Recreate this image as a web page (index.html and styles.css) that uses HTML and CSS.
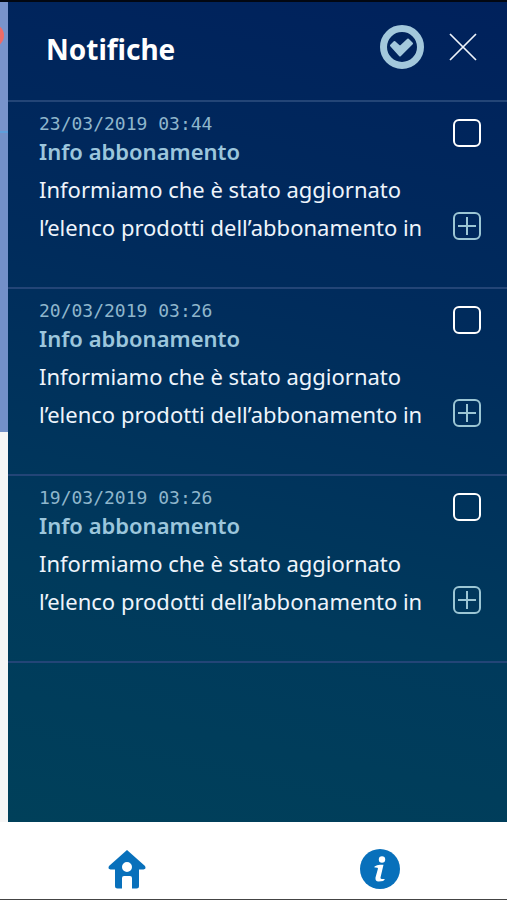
FILE: index.html
```html
<!DOCTYPE html>
<html lang="it">
<head>
<meta charset="utf-8">
<meta name="viewport" content="width=device-width, initial-scale=1">
<title>Notifiche</title>
<link rel="stylesheet" href="styles.css">
</head>
<body>
<div class="app">
  <div class="stage">
    <div class="page-edge">
      <div class="page-edge-top"></div>
      <div class="page-edge-main"></div>
      <span class="page-edge-badge"></span>
    </div>
    <main class="panel">
      <header class="panel-header">
        <h1>Notifiche</h1>
        <button class="icon-button" type="button" aria-label="Seleziona tutte">
          <svg width="44" height="44" viewBox="0 0 44 44"><circle cx="22" cy="22" r="18.5" fill="none" stroke="#a3c8dc" stroke-width="7"/><path fill="#a3c8dc" stroke="#a3c8dc" stroke-width="2" stroke-linejoin="round" d="M11 20.500L14.500 17L20 22L28 14.500L32 18.500L20 30.500Z"/></svg>
        </button>
        <button class="icon-button" type="button" aria-label="Chiudi">
          <svg width="28" height="28" viewBox="0 0 28 28"><path d="M1 1l26 26M27 1L1 27" fill="none" stroke="#eef4fb" stroke-width="1.700"/></svg>
        </button>
      </header>
      <ul class="list">
        <li class="item">
          <div class="item-body">
            <time datetime="2019-03-23T03:44">23/03/2019 03:44</time>
            <h2>Info abbonamento</h2>
            <p>Informiamo che è stato aggiornato l’elenco prodotti dell’abbonamento in</p>
          </div>
          <div class="item-actions">
            <input type="checkbox" aria-label="Seleziona notifica del 23/03/2019">
            <button class="icon-button" type="button" aria-label="Espandi">
              <svg width="28" height="28" viewBox="0 0 28 28"><rect x="1" y="1" width="26" height="26" rx="5" fill="none" stroke="#9cc6d4" stroke-width="2"/><path d="M14 5v18M5 14h18" fill="none" stroke="#9cc6d4" stroke-width="2"/></svg>
            </button>
          </div>
        </li>
        <li class="item">
          <div class="item-body">
            <time datetime="2019-03-20T03:26">20/03/2019 03:26</time>
            <h2>Info abbonamento</h2>
            <p>Informiamo che è stato aggiornato l’elenco prodotti dell’abbonamento in</p>
          </div>
          <div class="item-actions">
            <input type="checkbox" aria-label="Seleziona notifica del 20/03/2019">
            <button class="icon-button" type="button" aria-label="Espandi">
              <svg width="28" height="28" viewBox="0 0 28 28"><rect x="1" y="1" width="26" height="26" rx="5" fill="none" stroke="#9cc6d4" stroke-width="2"/><path d="M14 5v18M5 14h18" fill="none" stroke="#9cc6d4" stroke-width="2"/></svg>
            </button>
          </div>
        </li>
        <li class="item">
          <div class="item-body">
            <time datetime="2019-03-19T03:26">19/03/2019 03:26</time>
            <h2>Info abbonamento</h2>
            <p>Informiamo che è stato aggiornato l’elenco prodotti dell’abbonamento in</p>
          </div>
          <div class="item-actions">
            <input type="checkbox" aria-label="Seleziona notifica del 19/03/2019">
            <button class="icon-button" type="button" aria-label="Espandi">
              <svg width="28" height="28" viewBox="0 0 28 28"><rect x="1" y="1" width="26" height="26" rx="5" fill="none" stroke="#9cc6d4" stroke-width="2"/><path d="M14 5v18M5 14h18" fill="none" stroke="#9cc6d4" stroke-width="2"/></svg>
            </button>
          </div>
        </li>
      </ul>
    </main>
  </div>
  <nav class="tabs">
    <a href="#home" aria-label="Home">
      <svg width="40" height="40" viewBox="0 0 40 40"><path fill="#0870bb" fill-rule="evenodd" d="M20 1L38 17Q39.500 20 36.500 20.500H32V37Q32 39.500 29.500 39.500H25V29Q25 27 23 27H17Q15 27 15 29V39.500H10.500Q8 39.500 8 37V20.500H3.500Q.5 20 2 17ZM20 13a5 5 0 1 0 0 10a5 5 0 1 0 0-10Z"/></svg>
    </a>
    <a href="#info" aria-label="Informazioni">
      <svg width="40" height="40" viewBox="0 0 40 40"><circle cx="20" cy="20" r="20" fill="#0870bb"/><circle cx="22" cy="10.500" r="3.200" fill="#fff"/><path fill="#fff" d="M14.500 17.500Q17 15.800 20 15.800H23.500L20.500 28.500Q20.300 30 22 30H24.800Q24.500 32.500 18.500 32.500Q15 32.500 15.500 28.500L18 19.500Q18.200 18.300 14.500 18.500Z"/></svg>
    </a>
  </nav>
</div>
</body>
</html>
```

FILE: styles.css
```css
* {
  box-sizing: border-box;
}

body,
h1,
h2,
p,
ul {
  margin: 0;
  padding: 0;
}

body {
  font-family: "Noto Sans", "Open Sans", sans-serif;
  color: #eef4fb;
}

.app {
  display: flex;
  flex-direction: column;
  min-height: 100vh;
  border-top: 2px solid #020711;
  border-bottom: 1px solid #444;
  background: #fff;
}

.stage {
  display: flex;
  flex: 1;
}

.page-edge {
  position: relative;
  display: flex;
  flex-direction: column;
  flex: 0 0 8px;
  overflow: hidden;
  background: #f6f6f6;
}

.page-edge-top {
  height: 131px;
  border-bottom: 2px solid #5f9edb;
  background: #7893cb;
}

.page-edge-main {
  height: 299px;
  background: #7390c8;
}

.page-edge-badge {
  position: absolute;
  top: 22px;
  right: 4px;
  width: 23px;
  height: 23px;
  border-radius: 50%;
  background: #ee6a66;
}

.panel {
  flex: 1;
  min-width: 0;
  background: linear-gradient(192deg, #00215c 0%, #002b5c 35%, #003a5c 72%, #00405a 100%);
}

.panel-header {
  display: flex;
  align-items: center;
  gap: 25px;
  height: 100px;
  padding: 0 30px 9px 38px;
  border-bottom: 2px solid #234577;
}

h1 {
  flex: 1;
  padding-top: 4px;
  font-size: 28px;
  line-height: 36px;
  font-weight: 700;
  color: #fff;
}

.icon-button {
  display: block;
  padding: 0;
  border: 0;
  background: none;
  cursor: pointer;
}

svg {
  display: block;
}

.list {
  list-style: none;
}

.item {
  display: flex;
  gap: 8px;
  padding: 8px 26px 41px 31px;
  border-bottom: 2px solid #234577;
}

.item-body {
  flex: 1;
  min-width: 0;
}

time {
  display: block;
  font-family: "DejaVu Sans Mono", monospace;
  font-size: 18px;
  line-height: 28px;
  color: #8fb6cc;
}

h2 {
  font-size: 22px;
  line-height: 27px;
  font-weight: 600;
  color: #9cc6dc;
}

p {
  padding-top: 5px;
  font-size: 22px;
  line-height: 38px;
}

.item-actions {
  display: flex;
  flex-direction: column;
  gap: 65px;
  padding-top: 9px;
}

input[type="checkbox"] {
  appearance: none;
  width: 28px;
  height: 28px;
  margin: 0;
  border: 2px solid #fff;
  border-radius: 6px;
}

.tabs {
  display: grid;
  grid-template-columns: 1fr 1fr;
  justify-items: center;
  padding: 27px 0 10px;
  background: #fff;
}
```
